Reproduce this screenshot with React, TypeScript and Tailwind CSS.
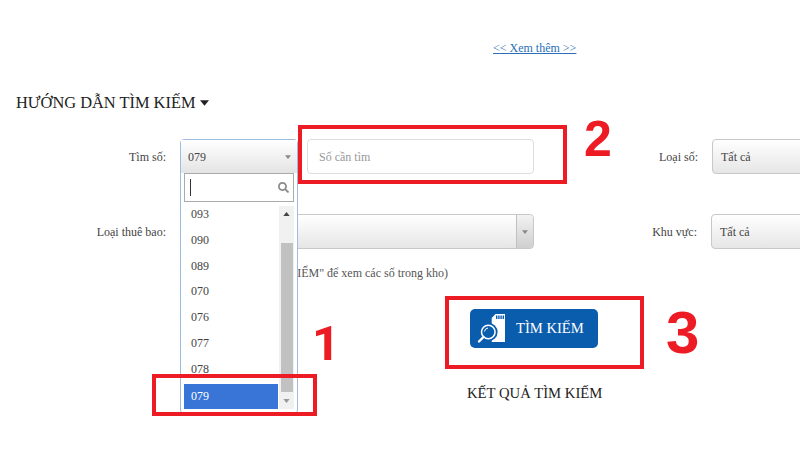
import { FaSearch } from "react-icons/fa";

const NUMBERS = ["093", "090", "089", "070", "076", "077", "078"];

function Arrow({ className }: { className: string }) {
  return (
    <svg viewBox="0 0 8 5" className={className} fill="currentColor">
      <path d="M0 0h8L4 5z" />
    </svg>
  );
}

function SmallSelect({ value }: { value: string }) {
  return (
    <div className="flex h-[35px] w-[100px] shrink-0 items-center rounded-[4px] border border-[#c8c8c8] bg-gradient-to-b from-white to-[#e6e6e6] pl-2 text-[12px] text-[#444]">
      {value}
    </div>
  );
}

function NumberDropdown() {
  return (
    <div className="absolute left-0 top-0 z-10 h-[275px] w-[118px] rounded-[4px] border border-[#9dbce0] bg-white">
      <div className="flex h-[33px] items-center justify-between bg-gradient-to-b from-white to-[#e4e4e4] px-[7px] text-[12px] text-[#444]">
        079
        <Arrow className="mr-[-1px] h-[4px] w-[6px] text-[#888]" />
      </div>
      <div className="mx-[3px] flex h-[29px] items-center justify-between border border-[#aaa] bg-white pl-[5px] pr-[4px]">
        <span className="h-[17px] w-px bg-[#333]" />
        <FaSearch className="text-[11px] text-[#8a8a8a]" />
      </div>
      <div className="relative">
        <ul className="text-[12px] leading-[25.8px] text-[#444]">
          {NUMBERS.map((n) => (
            <li key={n} className="pl-[10px]">
              {n}
            </li>
          ))}
          <li className="ml-[3px] mt-[1px] h-[25px] w-[94px] bg-[#3875d7] pl-[7px] text-white">079</li>
        </ul>
        <div className="absolute right-[3px] top-[4px] flex h-[203px] w-[15px] flex-col items-center bg-[#f1f1f1]">
          <div className="flex h-[37px] w-full justify-center pt-[6px]">
            <Arrow className="h-[4px] w-[7px] rotate-180 text-[#444]" />
          </div>
          <div className="h-[149px] w-[12px] bg-[#c1c1c1]" />
          <div className="flex flex-1 items-center justify-center">
            <Arrow className="h-[4px] w-[7px] text-[#999]" />
          </div>
        </div>
      </div>
    </div>
  );
}

function SearchCardIcon() {
  return (
    <svg viewBox="0 0 30 30" className="h-[30px] w-[30px]">
      {/* memory card */}
      <path d="M18.500 0H28v28H14.700V4z" fill="white" />
      <path d="M19 1.500h1.400v3.500H19zM21.200 1.500h1.400v3.500h-1.400zM23.400 1.500h1.400v3.500h-1.400zM25.600 1.500H27v3.500h-1.400z" fill="#0a5cad" />
      {/* magnifier */}
      <circle cx="11.300" cy="18" r="9.300" fill="#0a5cad" />
      <circle cx="11.300" cy="18" r="6.800" fill="none" stroke="white" strokeWidth="1.500" />
      <path d="M6.500 23 2 27.500" stroke="white" strokeWidth="2.400" strokeLinecap="round" />
      <path d="M7.500 17.500a4 4 0 0 1 3.500-3.500" fill="none" stroke="white" strokeWidth="1" />
    </svg>
  );
}

export default function App() {
  return (
    <div className="relative h-[450px] w-[800px] overflow-hidden bg-white font-['Liberation_Serif',serif] text-[#444]">
      <div className="pl-[493px] pt-[35px]">
        <a className="text-[12px] leading-[16px] text-[#2a6fb5] underline">&lt;&lt; Xem thêm &gt;&gt;</a>
      </div>

      <h2 className="ml-[16px] mt-[34px] flex items-center gap-[4px] text-[16.4px] leading-[20px] font-normal text-[#222]">
        HƯỚNG DẪN TÌM KIẾM
        <Arrow className="h-[6px] w-[9px] text-[#222]" />
      </h2>

      {/* Row 1 */}
      <div className="mt-[26px] flex h-[35px] items-center text-[12px]">
        <label className="w-[166px] shrink-0 text-right">Tìm số:</label>
        <div className="relative ml-[14px] h-[35px] w-[118px] shrink-0">
          <NumberDropdown />
        </div>
        <div className="ml-[9px] flex h-[35px] w-[227px] shrink-0 items-center rounded-[4px] border border-[#ddd] pl-[11px] text-[#999]">
          Số cần tìm
        </div>
        <label className="w-[164px] shrink-0 text-right">Loại số:</label>
        <div className="ml-[14px]">
          <SmallSelect value="Tất cả" />
        </div>
      </div>

      {/* Row 2 */}
      <div className="mt-[40px] flex h-[35px] items-center text-[12px]">
        <label className="w-[166px] shrink-0 text-right">Loại thuê bao:</label>
        <div className="ml-[14px] flex h-[35px] w-[354px] shrink-0 justify-end rounded-[4px] border border-[#c8c8c8] bg-gradient-to-b from-white to-[#e6e6e6]">
          <div className="flex w-[17px] items-center justify-center rounded-r-[4px] border-l border-[#c0c0c0] bg-gradient-to-b from-[#f2f2f2] to-[#cfcfcf]">
            <Arrow className="h-[4px] w-[6px] text-[#888]" />
          </div>
        </div>
        <label className="w-[163px] shrink-0 text-right">Khu vực:</label>
        <div className="ml-[14px]">
          <SmallSelect value="Tất cả" />
        </div>
      </div>

      <p className="mt-[16px] w-[448px] whitespace-nowrap text-right text-[12px] leading-[16px] text-[#555]">
        (Nhấn nút "TÌM KIẾM" để xem các số trong kho)
      </p>

      <div className="ml-[470px] mt-[28px] flex h-[39px] w-[128px] items-center gap-[9px] rounded-[5px] bg-[#0a5cad] pl-[7px] text-[14.6px] text-white">
        <SearchCardIcon />
        TÌM KIẾM
      </div>

      <p className="ml-[467px] mt-[35px] text-[14.7px] leading-[20px] text-[#222]">KẾT QUẢ TÌM KIẾM</p>

      {/* Red annotations */}
      <div className="absolute left-[152px] top-[374px] z-20 h-[42px] w-[165px] border-4 border-[#ed1c24]" />
      <div className="absolute left-[298px] top-[125px] z-20 h-[59px] w-[269px] border-4 border-[#ed1c24]" />
      <div className="absolute left-[445px] top-[296px] z-20 h-[73px] w-[199px] border-4 border-[#ed1c24]" />
      <span className="absolute left-[312px] top-[316px] z-20 font-['Roboto',sans-serif] text-[49px] leading-[56px] font-bold text-[#ed1c24]">1</span>
      <span className="absolute left-[584px] top-[110px] z-20 font-['Liberation_Sans',sans-serif] text-[50px] leading-[58px] font-bold text-[#ed1c24]">2</span>
      <span className="absolute left-[666px] top-[299px] z-20 font-['Liberation_Sans',sans-serif] text-[60px] leading-[68px] font-bold text-[#ed1c24]">3</span>
    </div>
  );
}
